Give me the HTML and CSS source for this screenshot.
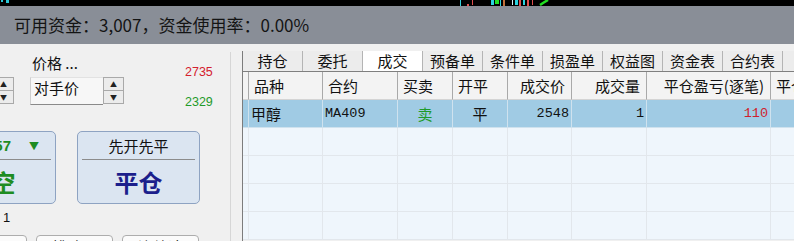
FILE: index.html
```html
<!DOCTYPE html>
<html lang="zh-CN">

<head>
    <meta charset="UTF-8">
    <meta name="viewport" content="width=device-width, initial-scale=1.0">
    <title>交易面板</title>
    <link rel="stylesheet" href="styles.css">
</head>

<body>
    <div class="chart-strip">
        <svg width="794" height="6" viewBox="0 0 794 6">
            <rect x="1" y="0" width="2" height="2" fill="#29c6d6" />
            <rect x="6" y="0" width="3" height="3" fill="#29c6d6" />
            <rect x="460" y="0" width="1" height="6" fill="#34d0dc" />
            <rect x="467" y="4" width="2" height="2" fill="#e05050" />
            <rect x="472" y="0" width="1" height="5" fill="#e05050" />
            <rect x="491" y="0" width="3" height="5" fill="#2ad4e0" />
            <rect x="495" y="0" width="4" height="4" fill="#22e022" />
            <rect x="500" y="0" width="1" height="6" fill="#2ad4e0" />
            <rect x="503" y="0" width="2" height="6" fill="#c0703a" />
            <rect x="512" y="0" width="1" height="5" fill="#d8f4f8" />
            <rect x="515" y="0" width="3" height="5" fill="#2ad4e0" />
            <rect x="519" y="0" width="2" height="6" fill="#e05050" />
            <rect x="523" y="0" width="2" height="5" fill="#2ad4e0" />
            <rect x="527" y="0" width="2" height="6" fill="#e05050" />
            <rect x="532" y="0" width="1" height="5" fill="#e05050" />
            <path d="M540 5 L543 3 L548 0" stroke="#22e022" stroke-width="2.5" fill="none" />
        </svg>
    </div>

    <div class="fund-bar">可用资金：3,007，资金使用率：0.00%</div>

    <div class="workspace">
        <div class="order-panel">
            <div class="price-row">
                <div class="spin spin-edge">
                    <span class="spin-btn">▲</span>
                    <span class="spin-btn">▼</span>
                </div>
                <div class="price-group">
                    <div class="price-label">价格 ...</div>
                    <div class="combo">
                        <div class="combo-text">对手价</div>
                        <div class="spin">
                            <span class="spin-btn">▲</span>
                            <span class="spin-btn">▼</span>
                        </div>
                    </div>
                </div>
                <div class="quotes">
                    <div class="ask">2735</div>
                    <div class="bid">2329</div>
                </div>
            </div>

            <div class="action-row">
                <div class="action-btn sell-btn">
                    <div class="btn-top"><span class="btn-price">2357</span><span class="btn-arrow">▼</span></div>
                    <div class="btn-main">卖空</div>
                </div>
                <div class="action-btn close-btn">
                    <div class="btn-top">先开先平</div>
                    <div class="btn-main">平仓</div>
                </div>
            </div>

            <div class="qty-note">1</div>

            <div class="mode-row">
                <button class="mode-btn">对价跟</button>
                <button class="mode-btn">排队跟</button>
                <button class="mode-btn">连续追</button>
            </div>
        </div>

        <div class="records">
            <div class="tabs">
                <div class="tab">持仓</div>
                <div class="tab">委托</div>
                <div class="tab active">成交</div>
                <div class="tab">预备单</div>
                <div class="tab">条件单</div>
                <div class="tab">损盈单</div>
                <div class="tab">权益图</div>
                <div class="tab">资金表</div>
                <div class="tab">合约表</div>
                <div class="tab">期权</div>
            </div>

            <table class="deals">
                <thead>
                    <tr>
                        <th class="c-mark"></th>
                        <th class="c-kind">品种</th>
                        <th class="c-code">合约</th>
                        <th class="c-side">买卖</th>
                        <th class="c-open">开平</th>
                        <th class="c-price num">成交价</th>
                        <th class="c-qty num">成交量</th>
                        <th class="c-pnl num">平仓盈亏(逐笔)</th>
                        <th class="c-more">平仓盈亏</th>
                    </tr>
                </thead>
                <tbody>
                    <tr class="selected">
                        <td></td>
                        <td>甲醇</td>
                        <td class="mono">MA409</td>
                        <td class="center sell">卖</td>
                        <td class="center">平</td>
                        <td class="mono num">2548</td>
                        <td class="mono num">1</td>
                        <td class="mono num loss">110</td>
                        <td></td>
                    </tr>
                    <tr class="empty"><td></td><td></td><td></td><td></td><td></td><td></td><td></td><td></td><td></td></tr>
                    <tr class="empty"><td></td><td></td><td></td><td></td><td></td><td></td><td></td><td></td><td></td></tr>
                    <tr class="empty"><td></td><td></td><td></td><td></td><td></td><td></td><td></td><td></td><td></td></tr>
                    <tr class="empty"><td></td><td></td><td></td><td></td><td></td><td></td><td></td><td></td><td></td></tr>
                </tbody>
            </table>
        </div>
    </div>
</body>

</html>
```

FILE: styles.css
```css
* {
    margin: 0;
    padding: 0;
    box-sizing: border-box;
}

body {
    width: 794px;
    height: 241px;
    overflow: hidden;
    background-color: #f0f0f0;
    font-family: "Noto Sans CJK SC", "Liberation Sans", sans-serif;
    color: #111;
}

.chart-strip {
    height: 6px;
    background-color: #000;
}

.chart-strip svg {
    display: block;
}

.fund-bar {
    height: 38px;
    line-height: 38px;
    padding-left: 14px;
    background-color: #898e97;
    font-size: 17px;
    color: #141414;
}

.workspace {
    display: flex;
    height: 197px;
}

/* left order panel */
.order-panel {
    flex: none;
    width: 231px;
    margin-top: 8px;
    border-right: 1px solid #d6d6d6;
    overflow: hidden;
}

.price-row {
    display: flex;
    height: 53px;
}

.spin {
    display: flex;
    flex-direction: column;
    width: 21px;
    height: 27px;
    border: 1px solid #a9a9a9;
    background-color: #ececec;
}

.spin-btn {
    flex: 1;
    display: flex;
    align-items: center;
    justify-content: center;
    font-size: 7px;
    line-height: 1;
    color: #222;
}

.spin-btn + .spin-btn {
    border-top: 1px solid #a9a9a9;
}

.spin-edge {
    margin-top: 25px;
    margin-left: -7px;
}

.price-group {
    margin-left: 16px;
}

.price-label {
    height: 25px;
    line-height: 22px;
    padding-left: 2px;
    font-size: 15px;
}

.combo {
    display: flex;
    height: 28px;
}

.combo-text {
    width: 73px;
    padding-left: 3px;
    font-size: 15px;
    line-height: 20px;
    background-color: #f7f7f7;
    border-top: 1px solid #e2e2e2;
    border-left: 1px solid #cfcfcf;
    border-bottom: 1px solid #8a8a8a;
}

.quotes {
    margin-left: 61px;
    padding-top: 13px;
    font-family: "Liberation Sans", sans-serif;
    font-size: 12.5px;
    line-height: 15px;
}

.ask {
    color: #d4202e;
}

.bid {
    margin-top: 15px;
    color: #1f9a2a;
}

.action-row {
    display: flex;
    gap: 21px;
    margin-top: 26px;
    margin-left: -67px;
}

.action-btn {
    width: 123px;
    height: 73px;
    padding: 0 4px;
    border: 1px solid #8ea3c2;
    border-radius: 5px;
    background-color: #dbe5f1;
}

.btn-top {
    height: 28px;
    line-height: 28px;
    border-bottom: 1px solid #8c8c8c;
    font-size: 15px;
    text-align: center;
}

.btn-main {
    height: 43px;
    line-height: 43px;
    font-size: 24px;
    font-weight: bold;
    text-align: center;
}

.sell-btn {
    color: #1e8c22;
}

.sell-btn .btn-top {
    display: flex;
    justify-content: flex-end;
    gap: 18px;
    padding-right: 12px;
}

.sell-btn .btn-main {
    padding-right: 6px;
}

.btn-price {
    font-family: "Liberation Sans", sans-serif;
    font-weight: bold;
}

.btn-arrow {
    font-size: 10px;
}

.close-btn .btn-main {
    color: #1c1f8c;
}

.qty-note {
    height: 22px;
    line-height: 20px;
    padding-top: 4px;
    padding-left: 3px;
    font-family: "Liberation Sans", sans-serif;
    font-size: 13px;
}

.mode-row {
    display: flex;
    gap: 9px;
    margin-top: 9px;
    margin-left: -50px;
}

.mode-btn {
    width: 77px;
    height: 24px;
    padding-top: 1px;
    border: 1px solid #adadad;
    border-radius: 4px;
    background-color: #fbfbfb;
    font-family: "Noto Sans CJK SC", sans-serif;
    font-size: 15px;
    line-height: 20px;
    color: #111;
    align-self: flex-start;
    display: flex;
    justify-content: center;
    align-items: flex-start;
}

/* right records panel */
.records {
    flex: 1;
    min-width: 0;
    margin-left: 11px;
    margin-top: 7px;
    border-left: 1px solid #7c7c7c;
    overflow: hidden;
}

.tabs {
    display: flex;
    height: 21px;
    background-color: #ececec;
    border-bottom: 1px solid #7f7f7f;
}

.tab {
    flex: none;
    width: 60px;
    border-right: 1px solid #b4b4b4;
    font-size: 15px;
    line-height: 20px;
    text-align: center;
    white-space: nowrap;
}

.tab.active {
    background-color: #fff;
}

.deals {
    width: 588px;
    table-layout: fixed;
    border-collapse: separate;
    border-spacing: 0;
    font-size: 15px;
}

.deals th,
.deals td {
    border-right: 1px solid #e2e7ec;
    border-bottom: 1px solid #e2e7ec;
    white-space: nowrap;
    overflow: hidden;
    text-align: left;
    font-weight: normal;
}

.deals th {
    height: 28px;
    padding: 0 5px;
    background-color: #f3f3f3;
    border-right-color: #a9a9a9;
    border-bottom-color: #d4d4d4;
    line-height: 27px;
}

.deals td {
    height: 28px;
    padding: 0 2px;
    background-color: #eff6fc;
}

.deals th.c-mark {
    padding: 0;
}

.c-mark { width: 6px; }
.c-kind { width: 74px; }
.c-code { width: 75px; }
.c-side { width: 55px; }
.c-open { width: 55px; }
.c-price { width: 64px; }
.c-qty { width: 75px; }
.c-pnl { width: 124px; }
.c-more { width: 60px; }

.deals th.num {
    text-align: right;
    padding-right: 6px;
}

.deals .selected td {
    height: 26px;
    background-color: #a0cbe4;
    border-right-color: #cfe2ee;
    border-bottom-color: #cfe2ee;
    line-height: 27px;
}

.deals .selected td:first-child {
    padding: 0;
}

.deals .empty td {
    padding: 0;
}

.deals td.num {
    text-align: right;
}

.deals td.center {
    text-align: center;
}

.mono {
    font-family: "Liberation Mono", monospace;
    font-size: 13.5px;
}

.sell {
    color: #1f9a2a;
}

.loss {
    color: #d01f2e;
}
```
